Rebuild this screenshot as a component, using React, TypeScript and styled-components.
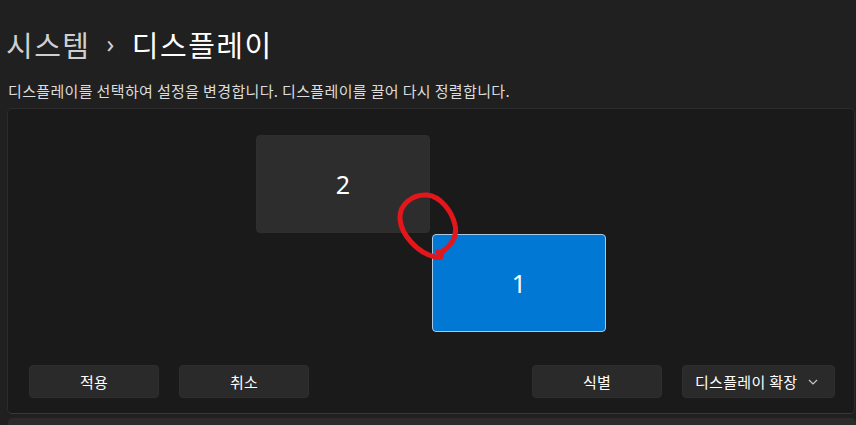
import styled, { createGlobalStyle } from "styled-components";

const GlobalStyle = createGlobalStyle`
  html, body {
    margin: 0;
    padding: 0;
    background: #202020;
    overflow: hidden;
  }
  body {
    font-family: "Noto Sans CJK KR", "Noto Sans", sans-serif;
    color: #ffffff;
  }
`;

const Page = styled.div`
  width: 856px;
  height: 425px;
  overflow: hidden;
  padding: 24px 0 0 7px;
  box-sizing: border-box;
`;

const Title = styled.h1`
  margin: 0 0 0 -1px;
  font-size: 29px;
  font-weight: 400;
  letter-spacing: 1.5px;
  line-height: 40px;
  display: flex;
  align-items: center;
`;

const Crumb = styled.span`
  color: #cfcfcf;
`;

const Chevron = styled.span`
  color: #cfcfcf;
  font-family: "Noto Sans", sans-serif;
  font-size: 25px;
  margin: -3px 16px 0 16px;
`;

const Current = styled.span`
  color: #ffffff;
`;

const Description = styled.p`
  margin: 17px 0 7px 1px;
  font-size: 15px;
  letter-spacing: 0.35px;
  line-height: 20px;
  color: #dddddd;
`;

const Panel = styled.section`
  width: 848px;
  background: #1a1a1a;
  border: 1px solid #2c2c2c;
  border-bottom-color: #383838;
  border-radius: 5px;
  box-sizing: border-box;
  padding-bottom: 15px;
`;

const Canvas = styled.div`
  position: relative;
  height: 256px;
`;

const Monitor = styled.div<{ $active?: boolean; $x: number; $y: number }>`
  position: absolute;
  left: ${(p) => p.$x}px;
  top: ${(p) => p.$y}px;
  width: 174px;
  height: 98px;
  box-sizing: border-box;
  border-radius: 4px;
  background: ${(p) => (p.$active ? "#0078d4" : "#2d2d2d")};
  border: 1px solid ${(p) => (p.$active ? "#a9c9e6" : "#2f2f2f")};
  display: flex;
  align-items: center;
  justify-content: center;
  font-family: "Noto Sans", sans-serif;
  font-size: 25px;
  color: #ffffff;
`;

const Scribble = styled.svg`
  position: absolute;
  left: 382px;
  top: 76px;
  overflow: visible;
`;

const Actions = styled.div`
  display: flex;
  gap: 20px;
  padding: 0 19px 0 21px;
`;

const Spacer = styled.div`
  flex: 1;
`;

const Button = styled.button<{ $wide?: boolean }>`
  height: 33px;
  width: ${(p) => (p.$wide ? 153 : 130)}px;
  background: #2a2a2a;
  border: 1px solid #2e2e2e;
  border-radius: 4px;
  color: #ffffff;
  font-family: "Noto Sans CJK KR", "Noto Sans", sans-serif;
  font-size: 15px;
  letter-spacing: 0.3px;
  display: flex;
  align-items: center;
  justify-content: ${(p) => (p.$wide ? "space-between" : "center")};
  padding: ${(p) => (p.$wide ? "0 16px 0 12px" : "0")};
  box-sizing: border-box;
`;

const NextCard = styled.div`
  margin: 4px 0 0 1px;
  height: 40px;
  width: 848px;
  background: #2b2b2b;
  border-radius: 5px;
`;

function App() {
  return (
    <>
      <GlobalStyle />
      <Page>
        <Title>
          <Crumb>시스템</Crumb>
          <Chevron>›</Chevron>
          <Current>디스플레이</Current>
        </Title>
        <Description>
          디스플레이를 선택하여 설정을 변경합니다. 디스플레이를 끌어 다시 정렬합니다.
        </Description>
        <Panel>
          <Canvas>
            <Monitor $x={248} $y={26}>
              2
            </Monitor>
            <Monitor $active $x={424} $y={125}>
              1
            </Monitor>
            <Scribble width="80" height="80" viewBox="0 0 80 80">
              <path
                d="M50 68 C60 62 68 52 65 40 C62 26 50 11 37 10 C22 9 9 20 10 34 C11 50 28 68 45 72 C53 74 53 69 48 67"
                fill="none"
                stroke="#e3171b"
                strokeWidth="5"
                strokeLinecap="round"
                strokeLinejoin="round"
              />
            </Scribble>
          </Canvas>
          <Actions>
            <Button>적용</Button>
            <Button>취소</Button>
            <Spacer />
            <Button>식별</Button>
            <Button $wide>
              디스플레이 확장
              <svg width="10" height="6" viewBox="0 0 10 6">
                <path d="M1 1 L5 5 L9 1" fill="none" stroke="#c8c8c8" strokeWidth="1.2" />
              </svg>
            </Button>
          </Actions>
        </Panel>
        <NextCard />
      </Page>
    </>
  );
}

export default App;
